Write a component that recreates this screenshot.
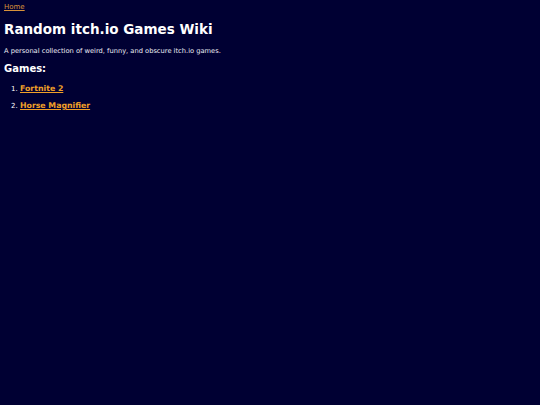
import React from 'react';

const games = ['Fortnite 2', 'Horse Magnifier'];

export default function App() {
  return (
    <div className="min-h-screen bg-[#000033] text-white px-[4px] py-[3px]" style={{ fontFamily: '"DejaVu Sans", Verdana, sans-serif' }}>
      <nav className="text-[7px] leading-[9px]">
        <a href="#" className="text-[#d9923a] underline">Home</a>
      </nav>
      <h1 className="text-[13.5px] font-bold mt-[8.5px] leading-[17px]">Random itch.io Games Wiki</h1>
      <p className="text-[6.7px] mt-[9px] leading-[9px] text-[#ececf4]">A personal collection of weird, funny, and obscure itch.io games.</p>
      <h2 className="text-[10px] font-bold mt-[7.5px] leading-[12px]">Games:</h2>
      <ol className="list-decimal pl-[16px] mt-[9px] text-[7.8px]">
        {games.map((g) => (
          <li key={g} className="mb-[7px] leading-[10px] marker:text-[7px] marker:font-normal">
            <a href="#" className="text-[#f0a028] font-bold underline">{g}</a>
          </li>
        ))}
      </ol>
    </div>
  );
}
